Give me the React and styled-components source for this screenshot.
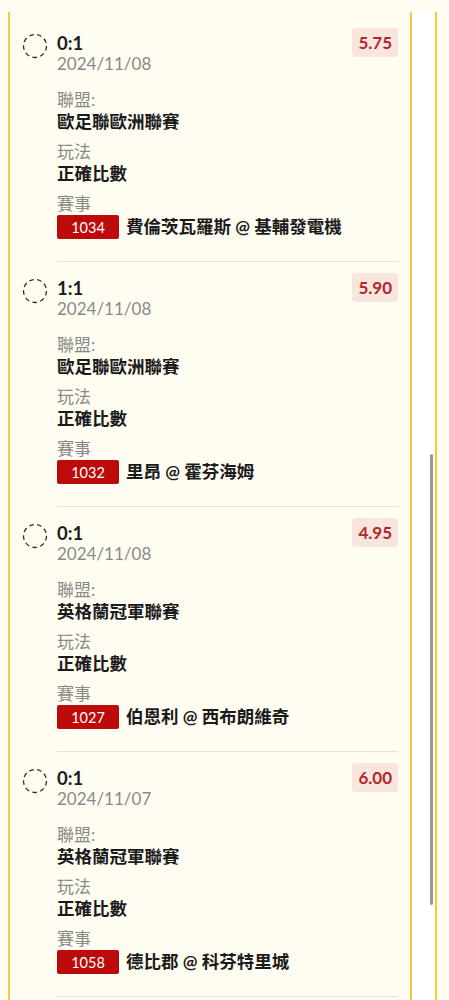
import styled, { createGlobalStyle } from "styled-components";

const bets = [
  {
    score: "0:1",
    date: "2024/11/08",
    odds: "5.75",
    league: "歐足聯歐洲聯賽",
    play: "正確比數",
    code: "1034",
    match: "費倫茨瓦羅斯 @ 基輔發電機",
  },
  {
    score: "1:1",
    date: "2024/11/08",
    odds: "5.90",
    league: "歐足聯歐洲聯賽",
    play: "正確比數",
    code: "1032",
    match: "里昂 @ 霍芬海姆",
  },
  {
    score: "0:1",
    date: "2024/11/08",
    odds: "4.95",
    league: "英格蘭冠軍聯賽",
    play: "正確比數",
    code: "1027",
    match: "伯恩利 @ 西布朗維奇",
  },
  {
    score: "0:1",
    date: "2024/11/07",
    odds: "6.00",
    league: "英格蘭冠軍聯賽",
    play: "正確比數",
    code: "1058",
    match: "德比郡 @ 科芬特里城",
  },
];

const color = {
  cream: "#fffcf2",
  yellow: "#f6c93a",
  night: "#1b1b1b",
  gray: "#8a8a8a",
  line: "#e6e1d5",
  red: "#bd0a0a",
  oddsText: "#b3282a",
  oddsBg: "#f8e5de",
  thumb: "#9b9b9b",
};

const GlobalStyle = createGlobalStyle`
  html, body {
    margin: 0;
    padding: 0;
    overflow: hidden;
    background: ${color.cream};
    font-family: Lato, "Noto Sans CJK TC", sans-serif;
  }
`;

// unchecked pick marker
const DashedCircle = () => (
  <svg width="26" height="26" viewBox="0 0 26 26">
    <circle
      cx="13"
      cy="13"
      r="11.5"
      fill="none"
      stroke="#2b2b2b"
      strokeWidth="1.3"
      strokeDasharray="4.6 3.4"
    />
  </svg>
);

const BetItem = ({ bet }) => (
  <Item>
    <Marker>
      <DashedCircle />
    </Marker>
    <Body>
      <Header>
        <Headline>
          <Score>{bet.score}</Score>
          <DateText>{bet.date}</DateText>
        </Headline>
        <Odds>{bet.odds}</Odds>
      </Header>

      <Meta>
        <Field>
          <Label>聯盟:</Label>
          <Value>{bet.league}</Value>
        </Field>
        <Field>
          <Label>玩法</Label>
          <Value>{bet.play}</Value>
        </Field>
        <Field>
          <Label>賽事</Label>
          <MatchRow>
            <Code>{bet.code}</Code>
            <Value>{bet.match}</Value>
          </MatchRow>
        </Field>
      </Meta>
    </Body>
  </Item>
);

const App = () => {
  return (
    <Page>
      <GlobalStyle />
      <Frame>
        <List>
          {bets.map((bet, index) => (
            <BetItem key={index} bet={bet} />
          ))}
        </List>
        <Track>
          <Thumb />
        </Track>
      </Frame>
    </Page>
  );
};

const Page = styled.div`
  height: 100vh;
  overflow: hidden;
  padding: 12px 12px 0 8px;
  box-sizing: border-box;
`;

const Frame = styled.div`
  display: flex;
  height: 100%;
  border-left: 2px solid ${color.yellow};
  border-right: 2px solid ${color.yellow};
`;

const List = styled.div`
  flex: 1;
  padding: 5px 12px 0 12px;
  border-right: 2px solid ${color.yellow};
  background: ${color.cream};
`;

const Track = styled.div`
  width: 23px;
  background: #ffffff;
  display: flex;
  flex-direction: column;
  align-items: flex-end;
  padding: 442px 2px 0 0;
  box-sizing: border-box;
`;

const Thumb = styled.div`
  width: 3px;
  height: 451px;
  border-radius: 2px;
  background: ${color.thumb};
`;

const Item = styled.div`
  display: flex;
  gap: 9px;
  padding-top: 11px;
`;

const Marker = styled.div`
  flex-shrink: 0;
  width: 26px;
  height: 26px;
  margin-top: 5px;
`;

const Body = styled.div`
  flex: 1;
  padding-bottom: 22px;
  border-bottom: 1px solid ${color.line};
`;

const Header = styled.div`
  display: flex;
  justify-content: space-between;
  align-items: flex-start;
`;

const Headline = styled.div`
  margin-top: 4px;
`;

const Score = styled.div`
  font-size: 18.5px;
  font-weight: 700;
  line-height: 22px;
  color: ${color.night};
`;

const DateText = styled.div`
  font-size: 17px;
  line-height: 20px;
  color: ${color.gray};
`;

const Odds = styled.div`
  padding: 0 6px;
  height: 29px;
  display: flex;
  align-items: center;
  border-radius: 4px;
  font-size: 17px;
  font-weight: 700;
  color: ${color.oddsText};
  background: ${color.oddsBg};
`;

const Meta = styled.div`
  display: flex;
  flex-direction: column;
  gap: 8px;
  margin-top: 15px;
`;

const Field = styled.div`
  display: flex;
  flex-direction: column;
`;

const Label = styled.div`
  font-size: 17px;
  line-height: 22px;
  color: ${color.gray};
`;

const Value = styled.div`
  font-size: 17.5px;
  font-weight: 700;
  line-height: 22px;
  color: ${color.night};
`;

const MatchRow = styled.div`
  display: flex;
  align-items: center;
  gap: 7px;
`;

const Code = styled.div`
  width: 62px;
  height: 24px;
  display: flex;
  align-items: center;
  justify-content: center;
  border-radius: 2px;
  font-size: 14.5px;
  color: #ffffff;
  background: ${color.red};
`;

export default App;
